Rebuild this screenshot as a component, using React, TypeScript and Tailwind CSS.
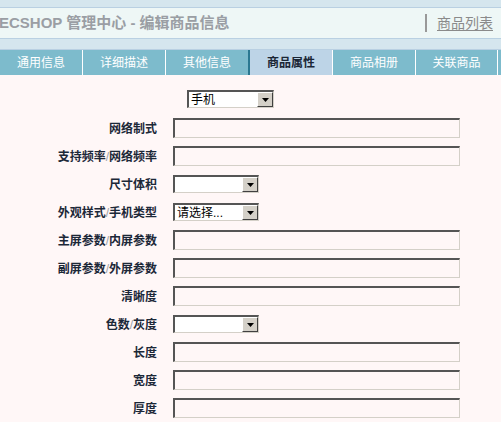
import React from 'react';

const font = '"Liberation Sans", "Noto Sans CJK SC", sans-serif';

type Field = { label: string; kind: 'text' | 'select'; value?: string };

const fields: Field[] = [
  { label: '网络制式', kind: 'text' },
  { label: '支持频率/网络频率', kind: 'text' },
  { label: '尺寸体积', kind: 'select' },
  { label: '外观样式/手机类型', kind: 'select', value: '请选择...' },
  { label: '主屏参数/内屏参数', kind: 'text' },
  { label: '副屏参数/外屏参数', kind: 'text' },
  { label: '清晰度', kind: 'text' },
  { label: '色数/灰度', kind: 'select' },
  { label: '长度', kind: 'text' },
  { label: '宽度', kind: 'text' },
  { label: '厚度', kind: 'text' },
];

// old-style inset dropdown with a grey arrow button
function Dropdown({ value, width }: { value?: string; width: string }) {
  return (
    <div className={`${width} h-[18px] flex border-t-2 border-l-2 border-t-[#555] border-l-[#555] border-b border-r border-b-[#d4d0c8] border-r-[#d4d0c8] bg-white`}>
      <div className="flex-1 px-[2px] text-[12px] leading-[16px] text-black overflow-hidden whitespace-nowrap">{value}</div>
      <div className="w-[16px] h-full bg-[#d4d0c8] border-t border-l border-t-white border-l-white border-b border-r border-b-[#404040] border-r-[#404040] flex items-center justify-center">
        <svg width="7" height="4" viewBox="0 0 7 4">
          <polygon points="0,0 7,0 3.5,4" fill="#000" />
        </svg>
      </div>
    </div>
  );
}

function Label({ text }: { text: string }) {
  const parts = text.split('/');
  return (
    <span className="font-bold text-[12px] text-[#1c2838]">
      {parts.map((p, i) => (
        <React.Fragment key={i}>
          {i > 0 && <span className="font-normal text-[#9aa0a8]">/</span>}
          {p}
        </React.Fragment>
      ))}
    </span>
  );
}

export default function App() {
  return (
    <div className="w-[501px] h-[422px] overflow-hidden bg-[#fff7f7]" style={{ fontFamily: font }}>
      {/* Header */}
      <div className="h-[8px] bg-[#d5e6ee] border-b border-[#b9d0e2]" />
      <div className="h-[31px] bg-[#eef7f6] border-b border-[#b9d0e2] flex items-center">
        <h1 className="ml-[-1px] text-[15px] font-bold text-[#9a9ea4] whitespace-nowrap">ECSHOP 管理中心 - 编辑商品信息</h1>
        <div className="ml-auto flex items-center mr-[8px]">
          <span className="w-[2px] h-[18px] bg-[#999] mr-[10px]" />
          <a className="text-[14px] text-[#8a8a8a] underline underline-offset-2">商品列表</a>
        </div>
      </div>
      <div className="h-[11px] bg-[#d5e6ee] border-b border-[#b9d0e2]" />

      {/* Tabs */}
      <div className="h-[25px] bg-[#7dbbcc] flex text-[12px] text-white">
        <div className="w-[83px] shrink-0 border-r border-white flex items-center justify-center">通用信息</div>
        <div className="w-[83px] shrink-0 border-r border-white flex items-center justify-center">详细描述</div>
        <div className="w-[82px] shrink-0 flex items-center justify-center">其他信息</div>
        <div className="w-[84px] shrink-0 border-l-2 border-[#2a7891] bg-[#bdd4e7] flex items-center justify-center font-bold text-[#1a2636]">商品属性</div>
        <div className="w-[84px] shrink-0 border-x border-white flex items-center justify-center">商品相册</div>
        <div className="w-[82px] shrink-0 border-r border-white flex items-center justify-center">关联商品</div>
      </div>

      {/* Attribute form */}
      <div className="pt-[15px]">
        <div className="ml-[187px] mb-[10px]">
          <Dropdown value="手机" width="w-[87px]" />
        </div>
        <div className="flex flex-col gap-[8px]">
          {fields.map((f) => (
            <div key={f.label} className="flex items-center h-[20px]">
              <div className="w-[157px] text-right">
                <Label text={f.label} />
              </div>
              <div className="ml-[16px]">
                {f.kind === 'text' ? (
                  <div className="w-[287px] h-[20px] border-t-2 border-l-2 border-t-[#555] border-l-[#555] border-b border-r border-b-[#d4d0c8] border-r-[#d4d0c8]" />
                ) : (
                  <Dropdown value={f.value} width="w-[86px]" />
                )}
              </div>
            </div>
          ))}
        </div>
      </div>
    </div>
  );
}
